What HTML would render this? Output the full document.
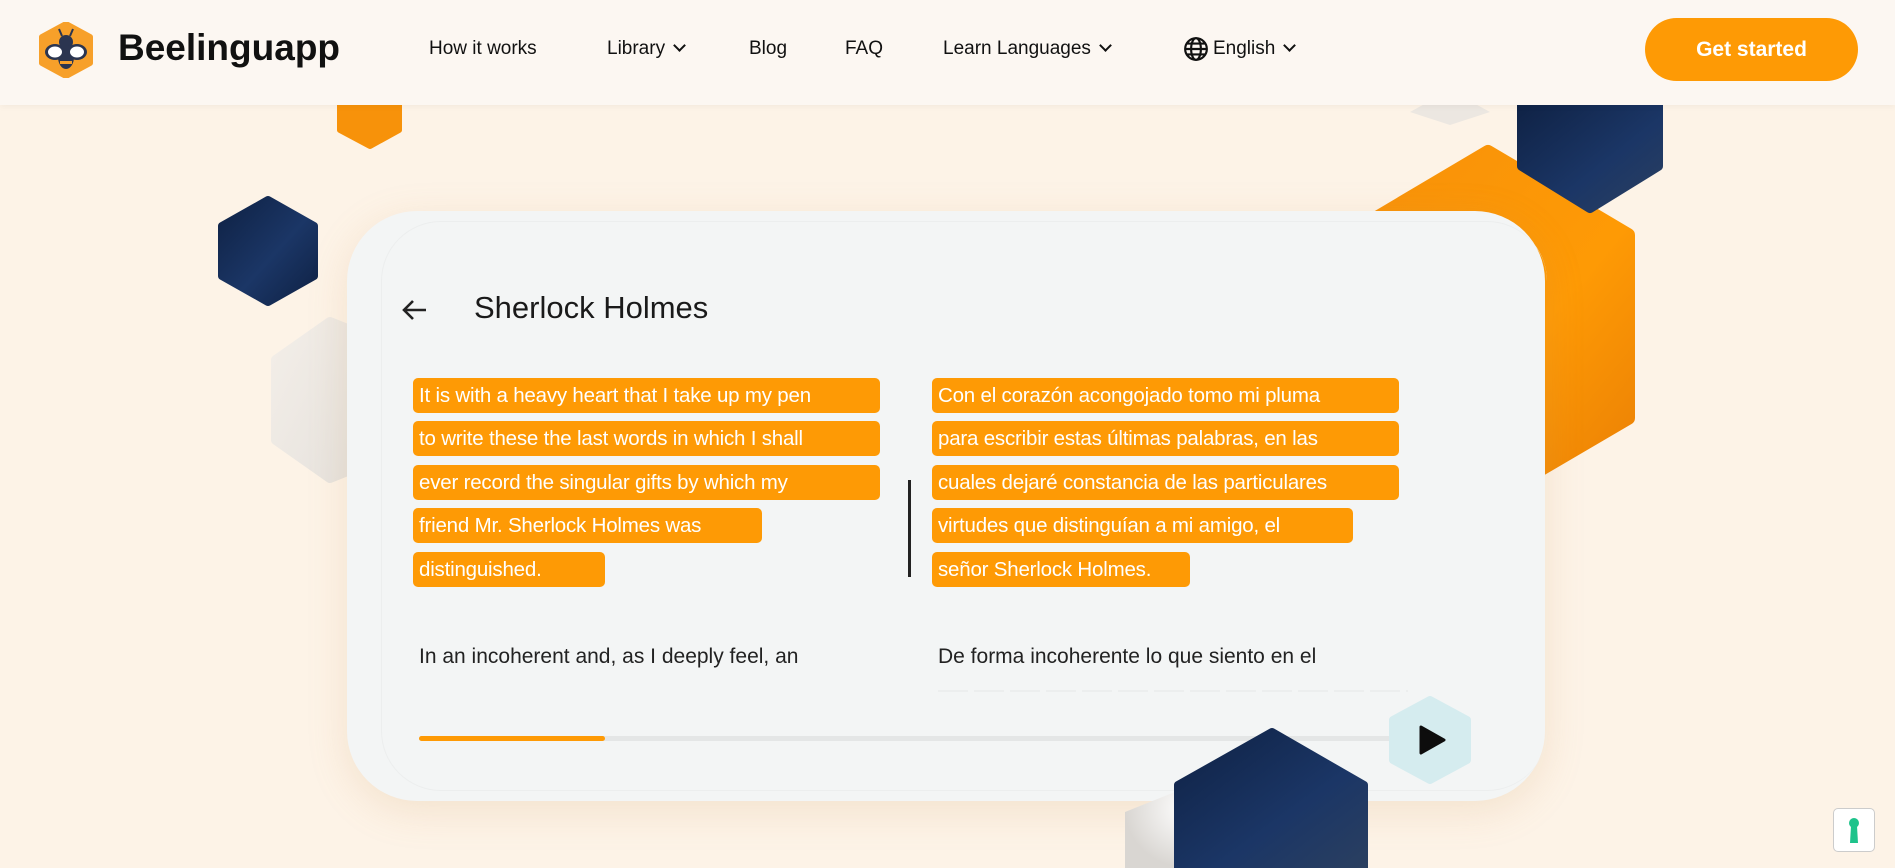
<!DOCTYPE html>
<html><head><meta charset="utf-8"><style>
*{margin:0;padding:0;box-sizing:border-box}
body{width:1895px;height:868px;overflow:hidden;background:#fdf3e7;font-family:"Liberation Sans",sans-serif;position:relative}
.hdr{position:absolute;left:0;top:0;width:1895px;height:105px;background:#fcf7f2;z-index:10;box-shadow:0 2px 6px rgba(0,0,0,.04)}
.nav{position:absolute;top:38px;font-size:19px;color:#111}
.chev{display:inline-block;width:9px;height:9px;border-right:2.5px solid #111;border-bottom:2.5px solid #111;transform:rotate(45deg);margin-left:10px;position:relative;top:-4px}
.btn{position:absolute;left:1645px;top:18px;width:213px;height:63px;border-radius:32px;background:#fe9a05;color:#fff;font-weight:bold;font-size:21px;text-align:center;line-height:63px}
.card{position:absolute;left:347px;top:211px;width:1198px;height:590px;border-radius:70px;background:#f3f5f5;box-shadow:0 10px 40px rgba(200,150,90,.18);z-index:3}
.inner{position:absolute;left:34px;top:10px;right:-2px;bottom:10px;border-radius:60px;border:1px solid #eceeee;border-right:none}
.hl{position:absolute;height:35px;background:#fe9a05;border-radius:5px;color:#fff;font-size:20.5px;line-height:35px;padding-left:6px;white-space:nowrap;letter-spacing:-.2px}
.t{position:absolute;font-size:21px;color:#222;white-space:nowrap}
</style></head><body>
<svg width="1895" height="868" style="position:absolute;left:0;top:0;z-index:1">
<defs>
<linearGradient id="nv" x1="0" y1="0" x2="1" y2="1"><stop offset="0" stop-color="#0f2245"/><stop offset=".55" stop-color="#1b3666"/><stop offset="1" stop-color="#0f2245"/></linearGradient>
<linearGradient id="or" x1="0" y1="0" x2="1" y2="1"><stop offset="0" stop-color="#f7910a"/><stop offset=".6" stop-color="#fe9a05"/><stop offset="1" stop-color="#ea7f05"/></linearGradient>
<linearGradient id="wh" x1="0" y1="0" x2="1" y2="1"><stop offset="0" stop-color="#f3eee8"/><stop offset="1" stop-color="#e6e2dd"/></linearGradient>
</defs>
<path d="M1488 152 L1628 235 L1628 418 L1488 500 L1348 418 L1348 235Z" fill="url(#or)" stroke="url(#or)" stroke-width="14" stroke-linejoin="round"/>
<path d="M1450 90 L1490 112 L1450 125 L1410 112Z" fill="#ece7e1"/>
<path d="M340 100 L399 100 L399 130 L370 146 L340 130Z" fill="#f7920a" stroke="#f7920a" stroke-width="6" stroke-linejoin="round"/>
<path d="M268 200 L314 226 L314 276 L268 302 L222 276 L222 226Z" fill="url(#nv)" stroke="url(#nv)" stroke-width="8" stroke-linejoin="round"/>
<path d="M330 322 L350 330 L350 470 L330 478 L276 440 L276 360Z" fill="url(#wh)" stroke="url(#wh)" stroke-width="10" stroke-linejoin="round"/>
</svg>
<svg width="1895" height="868" style="position:absolute;left:0;top:0;z-index:5;pointer-events:none">
<defs><linearGradient id="nv2" x1="0" y1="0" x2="1" y2="1"><stop offset="0" stop-color="#0f2245"/><stop offset=".6" stop-color="#1b3666"/><stop offset="1" stop-color="#2a3f60"/></linearGradient>
<radialGradient id="wb" cx=".6" cy=".4" r=".6"><stop offset="0" stop-color="#fff"/><stop offset="1" stop-color="#d9d6d2"/></radialGradient></defs>
<path d="M1522 100 L1658 100 L1658 166 L1590 208 L1522 166Z" fill="url(#nv2)" stroke="url(#nv2)" stroke-width="10" stroke-linejoin="round"/>
<path d="M1180 790 L1230 770 L1230 868 L1125 868 L1125 812Z" fill="url(#wb)"/>
<path d="M1272 732 L1364 785 L1364 868 L1178 868 L1178 785Z" fill="url(#nv2)" stroke="url(#nv2)" stroke-width="8" stroke-linejoin="round"/>
<path d="M1430 700 L1467 720 L1467 760 L1430 780 L1393 760 L1393 720Z" fill="#d5ecef" stroke="#d5ecef" stroke-width="8" stroke-linejoin="round"/>
<path d="M1421 727 L1444 740 L1421 753Z" fill="#0d0d0d" stroke="#0d0d0d" stroke-width="3" stroke-linejoin="round"/>
</svg>
<div class="hdr">
<svg width="60" height="56" style="position:absolute;left:36px;top:22px" viewBox="0 0 60 56">
<path d="M30 2 L54 15 L54 41 L30 54 L6 41 L6 15Z" fill="#f7a02a" stroke="#f7a02a" stroke-width="6" stroke-linejoin="round"/>
<ellipse cx="30" cy="20" rx="7" ry="7" fill="#2b3550"/>
<line x1="26" y1="14" x2="23" y2="7" stroke="#2b3550" stroke-width="2"/><line x1="34" y1="14" x2="37" y2="7" stroke="#2b3550" stroke-width="2"/>
<ellipse cx="30" cy="35" rx="8" ry="12" fill="#2b3550"/>
<ellipse cx="19" cy="30" rx="10" ry="8" fill="#2b3550"/><ellipse cx="41" cy="30" rx="10" ry="8" fill="#2b3550"/>
<ellipse cx="19" cy="30" rx="7" ry="5.5" fill="#fff"/><ellipse cx="41" cy="30" rx="7" ry="5.5" fill="#fff"/>
<rect x="24" y="39" width="12" height="3" fill="#f7a02a"/>
</svg>
<div style="position:absolute;left:118px;top:27px;font-size:37px;font-weight:bold;color:#111">Beelinguapp</div>
<div class="nav" style="left:429px">How it works</div>
<div class="nav" style="left:607px">Library<span class="chev"></span></div>
<div class="nav" style="left:749px">Blog</div>
<div class="nav" style="left:845px">FAQ</div>
<div class="nav" style="left:943px">Learn Languages<span class="chev"></span></div>
<svg width="26" height="26" viewBox="0 0 24 24" style="position:absolute;left:1183px;top:36px" fill="none" stroke="#111" stroke-width="2"><circle cx="12" cy="12" r="10"/><ellipse cx="12" cy="12" rx="4.5" ry="10"/><line x1="2" y1="12" x2="22" y2="12"/><path d="M4 7h16M4 17h16"/></svg>
<div class="nav" style="left:1213px">English<span class="chev"></span></div>
<div class="btn">Get started</div>
</div>
<div class="card"><div class="inner"></div>
<svg width="30" height="24" style="position:absolute;left:53px;top:87px" viewBox="0 0 30 24" fill="none" stroke="#222" stroke-width="2.6"><path d="M26 12H4M13 3L4 12L13 21"/></svg>
<div style="position:absolute;left:127px;top:79px;font-size:31px;color:#1a1a1a">Sherlock Holmes</div>
<div class="hl" style="left:66px;top:167px;width:467px">It is with a heavy heart that I take up my pen</div>
<div class="hl" style="left:66px;top:210px;width:467px">to write these the last words in which I shall</div>
<div class="hl" style="left:66px;top:254px;width:467px">ever record the singular gifts by which my</div>
<div class="hl" style="left:66px;top:297px;width:349px">friend Mr. Sherlock Holmes was</div>
<div class="hl" style="left:66px;top:341px;width:192px">distinguished.</div>
<div style="position:absolute;left:561px;top:269px;width:3px;height:97px;background:#222"></div>
<div class="hl" style="left:585px;top:167px;width:467px">Con el corazón acongojado tomo mi pluma</div>
<div class="hl" style="left:585px;top:210px;width:467px">para escribir estas últimas palabras, en las</div>
<div class="hl" style="left:585px;top:254px;width:467px">cuales dejaré constancia de las particulares</div>
<div class="hl" style="left:585px;top:297px;width:421px">virtudes que distinguían a mi amigo, el</div>
<div class="hl" style="left:585px;top:341px;width:258px">señor Sherlock Holmes.</div>
<div class="t" style="left:72px;top:434px">In an incoherent and, as I deeply feel, an</div>
<div class="t" style="left:591px;top:434px">De forma incoherente lo que siento en el</div>
<div style="position:absolute;left:591px;top:479px;width:470px;height:2px;background:repeating-linear-gradient(90deg,#eceeee 0 30px,transparent 30px 36px)"></div>
<div style="position:absolute;left:72px;top:525px;width:973px;height:5px;background:#e4e6e6;border-radius:3px"></div>
<div style="position:absolute;left:72px;top:525px;width:186px;height:5px;background:#fe9a05;border-radius:3px"></div>
</div>
<div style="position:absolute;left:1833px;top:808px;width:42px;height:44px;background:#fff;border:1px solid #ccc;border-radius:5px;z-index:6">
<svg width="16" height="28" viewBox="0 0 16 28" style="position:absolute;left:12px;top:8px"><circle cx="8" cy="6" r="5" fill="#1ec38b"/><path d="M5 9 L11 9 L12 26 L4 26Z" fill="#1ec38b"/></svg>
</div>
</body></html>
